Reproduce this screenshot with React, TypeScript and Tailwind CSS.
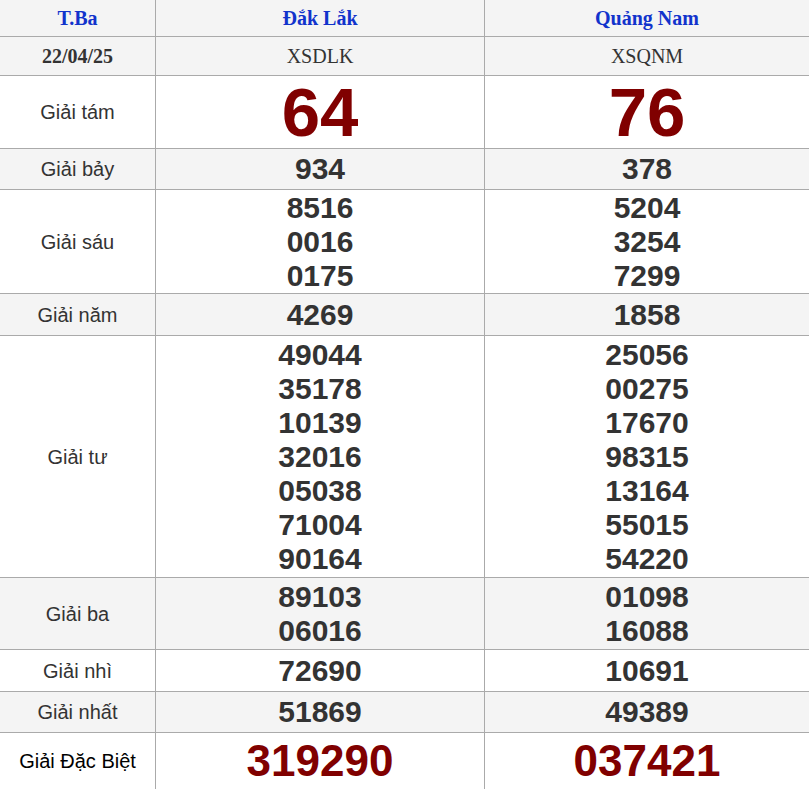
import React from "react";

const rows: { label: string; h: number; gray: boolean; a: string[]; b: string[]; kind?: string }[] = [
  { label: "Giải tám", h: 73, gray: false, a: ["64"], b: ["76"], kind: "big" },
  { label: "Giải bảy", h: 41, gray: true, a: ["934"], b: ["378"] },
  { label: "Giải sáu", h: 104, gray: false, a: ["8516", "0016", "0175"], b: ["5204", "3254", "7299"] },
  { label: "Giải năm", h: 42, gray: true, a: ["4269"], b: ["1858"] },
  { label: "Giải tư", h: 242, gray: false, a: ["49044", "35178", "10139", "32016", "05038", "71004", "90164"], b: ["25056", "00275", "17670", "98315", "13164", "55015", "54220"] },
  { label: "Giải ba", h: 72, gray: true, a: ["89103", "06016"], b: ["01098", "16088"] },
  { label: "Giải nhì", h: 42, gray: false, a: ["72690"], b: ["10691"] },
  { label: "Giải nhất", h: 41, gray: true, a: ["51869"], b: ["49389"] },
  { label: "Giải Đặc Biệt", h: 56, gray: false, a: ["319290"], b: ["037421"], kind: "db" },
];

function Nums({ v, kind }: { v: string[]; kind?: string }) {
  const cls =
    kind === "big"
      ? "text-[69px] leading-[69px] text-[#800000]"
      : kind === "db"
      ? "text-[44px] leading-[48px] text-[#800000]"
      : "text-[30px] leading-[34px] text-[#333]";
  return (
    <div className="flex flex-col items-center justify-center border-l border-[#aaa] h-full">
      {v.map((n) => (
        <div key={n} className={"font-bold " + cls}>{n}</div>
      ))}
    </div>
  );
}

export default function App() {
  const serif = { fontFamily: '"Liberation Serif", serif' };
  return (
    <div className="w-[809px] h-[789px] overflow-hidden bg-white" style={{ fontFamily: '"Liberation Sans", Arial, sans-serif' }}>
      <div className="grid grid-cols-[155px_329px_325px] h-[37px] bg-[#f4f4f4] border-b border-[#aaa] text-[#1133cc] font-bold text-[20px]" style={serif}>
        <div className="flex items-center justify-center">T.Ba</div>
        <div className="flex items-center justify-center border-l border-[#aaa]">Đắk Lắk</div>
        <div className="flex items-center justify-center border-l border-[#aaa]">Quảng Nam</div>
      </div>
      <div className="grid grid-cols-[155px_329px_325px] h-[39px] bg-[#f4f4f4] border-b border-[#aaa] text-[#333] text-[20px]" style={serif}>
        <div className="flex items-center justify-center font-bold">22/04/25</div>
        <div className="flex items-center justify-center border-l border-[#aaa]">XSDLK</div>
        <div className="flex items-center justify-center border-l border-[#aaa]">XSQNM</div>
      </div>
      {rows.map((r, i) => (
        <div
          key={r.label}
          className={"grid grid-cols-[155px_329px_325px] " + (r.gray ? "bg-[#f4f4f4] " : "bg-white ") + (i < rows.length - 1 ? "border-b border-[#aaa]" : "")}
          style={{ height: r.h }}
        >
          <div className={"flex items-center justify-center text-[20px] " + (r.kind === "db" ? "text-black" : "text-[#333]")}>{r.label}</div>
          <Nums v={r.a} kind={r.kind} />
          <Nums v={r.b} kind={r.kind} />
        </div>
      ))}
    </div>
  );
}
